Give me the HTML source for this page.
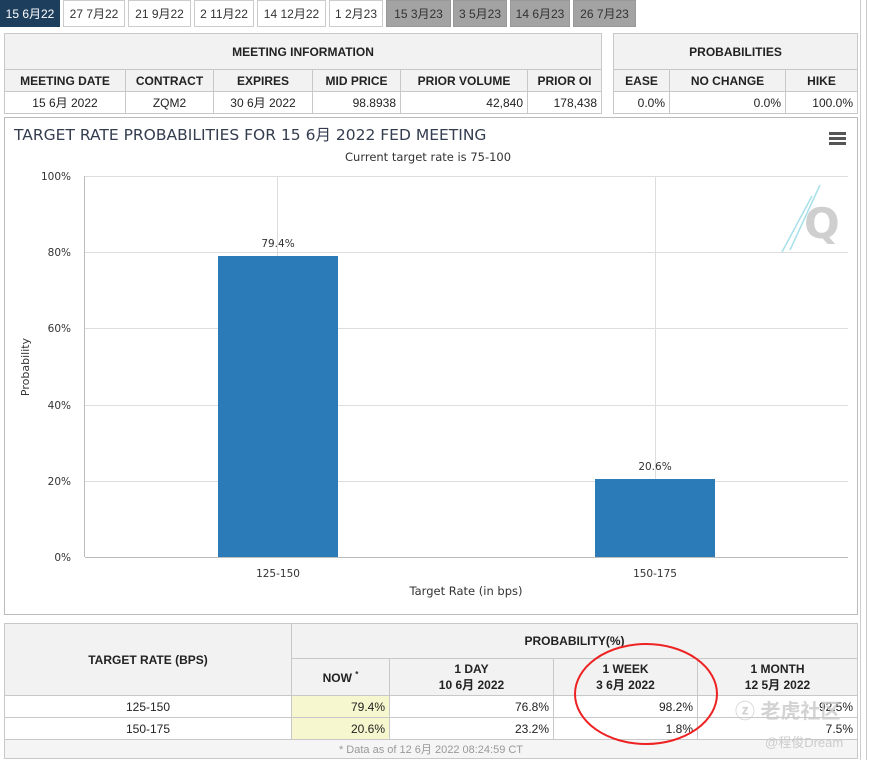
<!DOCTYPE html>
<html><head><meta charset="utf-8">
<style>
*{margin:0;padding:0;box-sizing:border-box}
body{width:869px;height:760px;background:#fff;font-family:"Liberation Sans","Noto Sans CJK SC",sans-serif;font-size:12px;color:#222;position:relative;overflow:hidden}
.a{position:absolute}
.tab{position:absolute;top:0;height:27px;line-height:27px;text-align:center;font-size:12px;border:1px solid #ccc;background:#fff;color:#333}
.tab.g{background:#a3a3a3;color:#333;border-color:#999}
.tab.s{background:#1d3f5d;color:#fff;border-color:#1d3f5d}
table{border-collapse:collapse;position:absolute;font-size:12px}
td,th{border:1px solid #c8c8c8}
th{background:#f2f2f2;font-weight:bold;color:#222}
.r{text-align:right;padding-right:4px}
.c{text-align:center}
</style></head><body>
<div class="tab s" style="left:0;width:60px">15 6月22</div>
<div class="tab" style="left:63px;width:62px">27 7月22</div>
<div class="tab" style="left:128px;width:63px">21 9月22</div>
<div class="tab" style="left:194px;width:60px">2 11月22</div>
<div class="tab" style="left:257px;width:69px">14 12月22</div>
<div class="tab" style="left:329px;width:54px">1 2月23</div>
<div class="tab g" style="left:386px;width:65px">15 3月23</div>
<div class="tab g" style="left:453px;width:54px">3 5月23</div>
<div class="tab g" style="left:510px;width:60px">14 6月23</div>
<div class="tab g" style="left:573px;width:63px">26 7月23</div>

<table style="left:4px;top:33px;width:598px">
<tr style="height:36px"><th colspan="6">MEETING INFORMATION</th></tr>
<tr style="height:22px"><th style="width:121px">MEETING DATE</th><th style="width:88px">CONTRACT</th><th style="width:99px">EXPIRES</th><th style="width:88px">MID PRICE</th><th style="width:127px">PRIOR VOLUME</th><th>PRIOR OI</th></tr>
<tr style="height:22px"><td class="c">15 6月 2022</td><td class="c">ZQM2</td><td class="c">30 6月 2022</td><td class="r">98.8938</td><td class="r">42,840</td><td class="r">178,438</td></tr>
</table>
<table style="left:613px;top:33px;width:245px">
<tr style="height:36px"><th colspan="3">PROBABILITIES</th></tr>
<tr style="height:22px"><th style="width:56px">EASE</th><th style="width:116px">NO CHANGE</th><th>HIKE</th></tr>
<tr style="height:22px"><td class="r">0.0%</td><td class="r">0.0%</td><td class="r">100.0%</td></tr>
</table>

<div class="a" style="left:4px;top:117px;width:854px;height:498px;border:1px solid #bbb"></div>
<div class="a" style="left:14px;top:123px;font-family:'DejaVu Sans','Noto Sans CJK SC',sans-serif;font-size:15.5px;color:#333d4f">TARGET RATE PROBABILITIES FOR 15 6月 2022 FED MEETING</div>
<div class="a" style="left:345px;top:150px;font-family:'DejaVu Sans','Noto Sans CJK SC',sans-serif;font-size:11.5px;color:#333">Current target rate is 75-100</div>
<div class="a" style="left:829px;top:132px;width:17px;height:3px;background:#555;box-shadow:0 5px 0 #555,0 10px 0 #555"></div>
<svg class="a" style="left:0;top:0" width="869" height="615">
<g stroke="#ddd" stroke-width="1">
<line x1="85" y1="176.5" x2="848" y2="176.5"/><line x1="85" y1="252.5" x2="848" y2="252.5"/><line x1="85" y1="328.5" x2="848" y2="328.5"/><line x1="85" y1="405.5" x2="848" y2="405.5"/><line x1="85" y1="481.5" x2="848" y2="481.5"/>
<line x1="277.5" y1="176" x2="277.5" y2="557"/><line x1="655.5" y1="176" x2="655.5" y2="557"/>
</g>
<line x1="84.5" y1="176" x2="84.5" y2="557" stroke="#bbb"/>
<line x1="85" y1="557.5" x2="848" y2="557.5" stroke="#bbb"/>
<rect x="218" y="256" width="120" height="301" fill="#2b7bb9"/>
<rect x="595" y="479" width="120" height="78" fill="#2b7bb9"/>
<g font-family="DejaVu Sans,sans-serif" font-size="10.5" fill="#333" text-anchor="end">
<text x="71" y="180">100%</text><text x="71" y="256">80%</text><text x="71" y="332">60%</text><text x="71" y="409">40%</text><text x="71" y="485">20%</text><text x="71" y="561">0%</text>
</g>
<g font-family="DejaVu Sans,sans-serif" font-size="10.5" fill="#333" text-anchor="middle">
<text x="278" y="247">79.4%</text><text x="655" y="470">20.6%</text>
<text x="278" y="577">125-150</text><text x="655" y="577">150-175</text>
<text x="466" y="595" font-size="11.5">Target Rate (in bps)</text>
<text transform="translate(29,367) rotate(-90)" font-size="11">Probability</text>
</g>
<text x="804" y="238" font-family="DejaVu Sans,sans-serif" font-size="42" font-weight="bold" fill="#cfcfcf">Q</text>
<g stroke="#a8e0ea" stroke-width="1.5"><line x1="820" y1="185" x2="790" y2="250"/><line x1="812" y1="196" x2="782" y2="252"/></g>
</svg>

<table style="left:4px;top:623px;width:854px">
<tr style="height:35px"><th rowspan="2" style="width:287px">TARGET RATE (BPS)</th><th colspan="4">PROBABILITY(%)</th></tr>
<tr style="height:37px"><th style="width:98px">NOW <sup style="font-size:8px">*</sup></th><th style="width:164px">1 DAY<br>10 6月 2022</th><th style="width:144px">1 WEEK<br>3 6月 2022</th><th>1 MONTH<br>12 5月 2022</th></tr>
<tr style="height:22px"><td class="c">125-150</td><td class="r" style="background:#f7f7cf">79.4%</td><td class="r">76.8%</td><td class="r">98.2%</td><td class="r">92.5%</td></tr>
<tr style="height:22px"><td class="c">150-175</td><td class="r" style="background:#f7f7cf">20.6%</td><td class="r">23.2%</td><td class="r">1.8%</td><td class="r">7.5%</td></tr>
<tr style="height:19px"><td colspan="5" class="c" style="background:#f5f5f5;color:#999;font-size:11px">* Data as of 12 6月 2022 08:24:59 CT</td></tr>
</table>
<svg class="a" style="left:0;top:0" width="869" height="760">
<ellipse cx="646" cy="694" rx="71" ry="50" fill="none" stroke="#e22" stroke-width="2"/>
</svg>
<div class="a" style="left:735px;top:695px;font-size:20px;color:rgba(200,200,200,0.8);font-weight:bold">ⓩ 老虎社区</div>
<div class="a" style="left:765px;top:732px;font-size:13px;color:rgba(200,200,200,0.9)">@程俊Dream</div>
<div class="a" style="left:860px;top:0;width:1px;height:760px;background:#ccc"></div>
<div class="a" style="left:866px;top:0;width:1px;height:760px;background:#ccc"></div>
</body></html>
